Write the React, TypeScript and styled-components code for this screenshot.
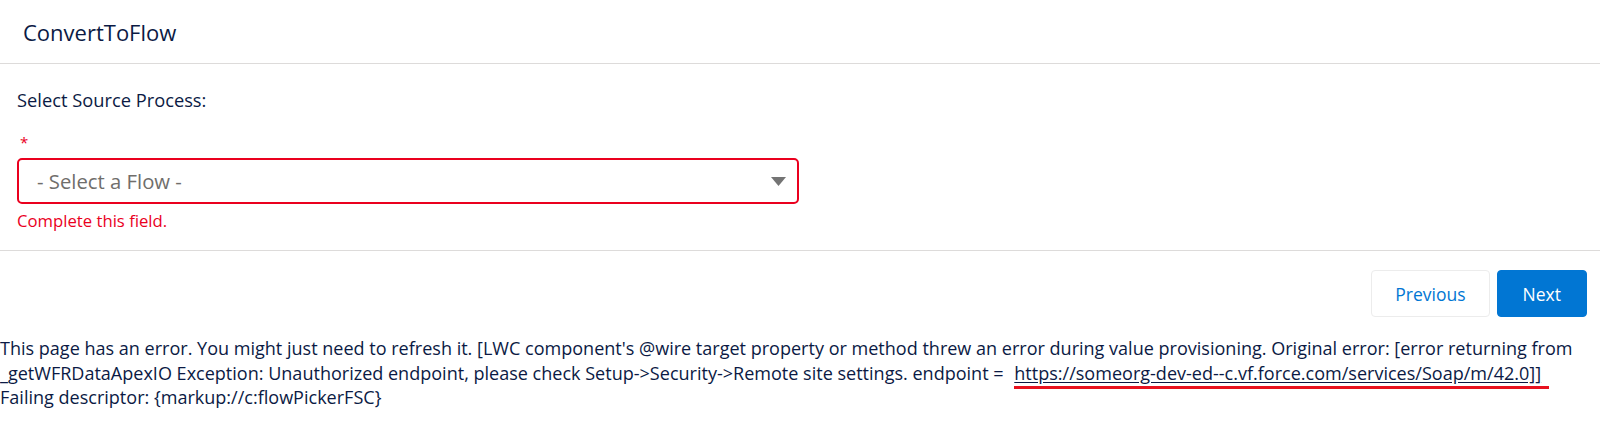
import React from "react"
import styled, { createGlobalStyle } from "styled-components"

const GlobalStyle = createGlobalStyle`
  html, body {
    margin: 0;
    padding: 0;
    background: #fff;
  }
  body {
    font-family: "Open Sans", "Noto Sans", "Liberation Sans", sans-serif;
    color: #0b1a44;
  }
`

const Card = styled.section`
  display: flex;
  flex-direction: column;
`

const Header = styled.header`
  height: 63px;
  display: flex;
  align-items: center;
  padding-left: 23px;
  border-bottom: 1px solid #dddbda;
`

const Title = styled.h1`
  margin: 0;
  font-size: 22px;
  font-weight: 400;
  color: #0b1a44;
`

const Body = styled.div`
  display: flex;
  flex-direction: column;
  padding: 24px 16px 17px 17px;
  border-bottom: 1px solid #dddbda;
`

const Label = styled.div`
  font-size: 18.3px;
  line-height: 24px;
`

const Required = styled.abbr`
  display: block;
  margin-top: 21px;
  padding-left: 3px;
  color: #ea001e;
  font-size: 15px;
  line-height: 18px;
  text-decoration: none;
`

const SelectBox = styled.div`
  margin-top: 7px;
  width: 782px;
  height: 46px;
  box-sizing: border-box;
  border: 2px solid #ea001e;
  border-radius: 5px;
  display: flex;
  align-items: center;
  justify-content: space-between;
  padding: 0 11px 0 18px;
`

const Placeholder = styled.span`
  font-size: 20.3px;
  color: #706e6b;
`

const Caret = styled.svg`
  width: 15px;
  height: 9px;
  fill: #747474;
`

const HelpText = styled.div`
  margin-top: 5px;
  font-size: 16.7px;
  line-height: 24px;
  color: #ea001e;
`

const Footer = styled.div`
  display: flex;
  justify-content: flex-end;
  gap: 7px;
  padding: 19px 13px 0 0;
`

const NavButton = styled.button<{ $primary?: boolean }>`
  height: 47px;
  box-sizing: border-box;
  border-radius: 4px;
  font-family: inherit;
  font-size: 17.5px;
  cursor: pointer;
  border: 1px solid ${(p) => (p.$primary ? "#0176d3" : "#ececec")};
  background: ${(p) => (p.$primary ? "#0176d3" : "#fff")};
  color: ${(p) => (p.$primary ? "#fff" : "#0176d3")};
  padding: 0 ${(p) => (p.$primary ? "25px" : "23px")};
`

const ErrorText = styled.p`
  margin: 19px 0 0 0;
  font-size: 18.05px;
  line-height: 24.5px;
  color: #0b1a44;
  white-space: nowrap;
`

const Endpoint = styled.span`
  text-decoration: underline;
  text-underline-offset: 2px;
  border-bottom: 3px solid #e8121f;
  padding-bottom: 1px;
  margin-left: 6px;
  padding-right: 8px;
`

export default function App() {
  return (
    <>
      <GlobalStyle />
      <Card>
        <Header>
          <Title>ConvertToFlow</Title>
        </Header>
        <Body>
          <Label>Select Source Process:</Label>
          <Required title="required">*</Required>
          <SelectBox>
            <Placeholder>- Select a Flow -</Placeholder>
            <Caret viewBox="0 0 15 9">
              <path d="M0 0h15L7.5 9z" />
            </Caret>
          </SelectBox>
          <HelpText>Complete this field.</HelpText>
        </Body>
        <Footer>
          <NavButton>Previous</NavButton>
          <NavButton $primary>Next</NavButton>
        </Footer>
      </Card>
      <ErrorText>
        This page has an error. You might just need to refresh it. [LWC component's @wire target property or method
        threw an error during value provisioning. Original error: [error returning from
        <br />
        _getWFRDataApexIO Exception: Unauthorized endpoint, please check Setup-&gt;Security-&gt;Remote site settings.
        endpoint = <Endpoint>https://someorg-dev-ed--c.vf.force.com/services/Soap/m/42.0]]</Endpoint>
        <br />
        Failing descriptor: {"{markup://c:flowPickerFSC}"}
      </ErrorText>
    </>
  )
}
